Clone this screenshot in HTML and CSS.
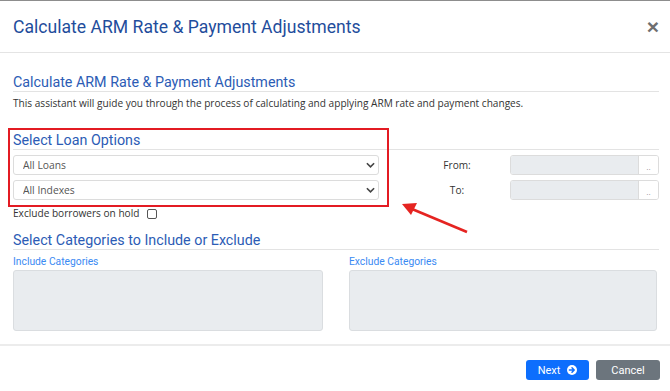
FILE: index.html
```html
<!DOCTYPE html>
<html lang="en">
<head>
    <meta charset="UTF-8">
    <meta name="viewport" content="width=device-width, initial-scale=1.0">
    <title>Calculate ARM Rate &amp; Payment Adjustments</title>
    <link rel="stylesheet" href="styles.css">
</head>
<body>
    <div class="modal">
        <div class="modal-header">
            <h1>Calculate ARM Rate &amp; Payment Adjustments</h1>
            <button class="close-btn" type="button">&times;</button>
        </div>

        <div class="modal-body">
            <h2 class="section-title">Calculate ARM Rate &amp; Payment Adjustments</h2>
            <p class="intro">This assistant will guide you through the process of calculating and applying ARM rate and payment changes.</p>

            <h2 class="section-title loan-title">Select Loan Options</h2>
            <div class="loan-grid">
                <div class="select-wrap">
                    <select><option>All Loans</option></select>
                    <svg class="chevron" viewBox="0 0 10 6" width="9" height="6"><path d="M1 1l4 4 4-4" fill="none" stroke="#444" stroke-width="1.8"/></svg>
                </div>
                <label class="date-label">From:</label>
                <div class="date-field">
                    <input type="text" disabled>
                    <button type="button">..</button>
                </div>

                <div class="select-wrap">
                    <select><option>All Indexes</option></select>
                    <svg class="chevron" viewBox="0 0 10 6" width="9" height="6"><path d="M1 1l4 4 4-4" fill="none" stroke="#444" stroke-width="1.8"/></svg>
                </div>
                <label class="date-label">To:</label>
                <div class="date-field">
                    <input type="text" disabled>
                    <button type="button">..</button>
                </div>
            </div>

            <div class="hold-row">
                <span>Exclude borrowers on hold</span>
                <input type="checkbox">
            </div>

            <h2 class="section-title cat-title">Select Categories to Include or Exclude</h2>
            <div class="cat-grid">
                <div class="cat-col">
                    <div class="cat-label">Include Categories</div>
                    <div class="cat-box"></div>
                </div>
                <div class="cat-col">
                    <div class="cat-label">Exclude Categories</div>
                    <div class="cat-box"></div>
                </div>
            </div>
        </div>

        <div class="modal-footer">
            <button class="btn btn-next" type="button">
                Next
                <svg viewBox="0 0 10 10" width="10" height="10"><circle cx="5" cy="5" r="5" fill="#fff"/><path d="M2.4 5h4.6M5 2.8L7.2 5 5 7.2" fill="none" stroke="#0d6efd" stroke-width="1.5" stroke-linecap="round" stroke-linejoin="round"/></svg>
            </button>
            <button class="btn btn-cancel" type="button">Cancel</button>
        </div>

        <!-- annotation overlay -->
        <div class="highlight-box"></div>
        <svg class="arrow" width="670" height="391" viewBox="0 0 670 391">
            <line x1="467" y1="232" x2="412" y2="209" stroke="#e52421" stroke-width="2.6"/>
            <polygon points="402,204 417,203 411,215" fill="#e52421"/>
        </svg>
    </div>
</body>
</html>
```

FILE: styles.css
```css
* {
    margin: 0;
    padding: 0;
    box-sizing: border-box;
}

body {
    font-family: 'Open Sans', 'Liberation Sans', sans-serif;
    background: #fff;
    color: #333;
    width: 670px;
    height: 391px;
    overflow: hidden;
}

.modal {
    position: relative;
    width: 670px;
    height: 391px;
    border-top: 1px solid #8d8d8d;
    background: #fff;
}

.modal-header {
    display: flex;
    justify-content: space-between;
    align-items: center;
    height: 52px;
    padding: 0 11px 0 13px;
    border-bottom: 1px solid #e4e4e4;
}

.modal-header h1 {
    font-family: 'Roboto', sans-serif;
    font-size: 17.6px;
    font-weight: 400;
    color: #1f4d9c;
}

.close-btn {
    border: none;
    background: none;
    font-family: 'Liberation Sans', sans-serif;
    font-size: 21px;
    font-weight: bold;
    color: #6f6f6f;
    line-height: 1;
    cursor: pointer;
}

.modal-body {
    padding: 20px 11px 13px 13px;
}

.section-title {
    font-family: 'Roboto', sans-serif;
    font-size: 14.3px;
    font-weight: 400;
    line-height: 18px;
    color: #2c5cb5;
    border-bottom: 1px solid #e3e3e3;
}

.intro {
    margin-top: 4px;
    font-size: 10.1px;
    line-height: 14px;
    color: #333;
}

.loan-title {
    margin-top: 22px;
    line-height: 17px;
}

.loan-grid {
    display: grid;
    grid-template-columns: 366px 1fr 149px;
    row-gap: 5px;
    margin-top: 5px;
    align-items: center;
}

.select-wrap {
    position: relative;
    height: 20px;
}

.select-wrap select {
    display: block;
    appearance: none;
    width: 100%;
    height: 20px;
    border: 1px solid #dcdcdc;
    border-radius: 3px;
    background: #fff;
    padding: 0 9px;
    font-family: 'Open Sans', sans-serif;
    font-size: 10.3px;
    color: #555;
}

.chevron {
    position: absolute;
    right: 4px;
    top: 7px;
}

.date-label {
    justify-self: end;
    width: 54px;
    margin-right: 26px;
    text-align: center;
    font-size: 10.1px;
    color: #333;
}

.date-field {
    display: flex;
    height: 20px;
    border: 1px solid #dcdcdc;
    border-radius: 3px;
    overflow: hidden;
}

.date-field input {
    flex: 1;
    width: 0;
    min-width: 0;
    border: none;
    background: #e9ecef;
    border-right: 1px solid #dcdcdc;
}

.date-field button {
    flex: 0 0 19px;
    border: none;
    background: #fff;
    color: #888;
    font-size: 8px;
    padding-top: 4px;
}

.hold-row {
    display: flex;
    align-items: center;
    gap: 8px;
    height: 14px;
    margin-top: 6px;
    font-size: 10.1px;
    color: #333;
}

.hold-row input {
    appearance: none;
    width: 10px;
    height: 10px;
    border: 1px solid #555;
    border-radius: 2px;
    background: #fff;
    margin-top: 2px;
}

.cat-title {
    margin-top: 11px;
}

.cat-grid {
    display: grid;
    grid-template-columns: 310px 308px;
    column-gap: 26px;
    margin-top: 5px;
}

.cat-label {
    font-family: 'Roboto', sans-serif;
    font-size: 10.3px;
    line-height: 14px;
    color: #3a8af3;
}

.cat-box {
    height: 61px;
    margin-top: 1px;
    background: #e9ecef;
    border: 1px solid #dadde0;
    border-radius: 3px;
}

.modal-footer {
    display: flex;
    justify-content: flex-end;
    gap: 7px;
    padding: 14px 10px 0 0;
    border-top: 2px solid #ececec;
}

.btn {
    display: flex;
    align-items: center;
    justify-content: center;
    gap: 7px;
    height: 20px;
    border: none;
    border-radius: 3px;
    font-family: 'Roboto', sans-serif;
    font-size: 11px;
    color: #fff;
    cursor: pointer;
}

.btn-next {
    width: 63px;
    background: #0d6efd;
}

.btn-cancel {
    width: 64px;
    background: #6c757d;
}

.highlight-box {
    position: absolute;
    left: 8px;
    top: 127px;
    width: 381px;
    height: 79px;
    border: 2.5px solid #e31b23;
}

.arrow {
    position: absolute;
    left: 0;
    top: -1px;
    pointer-events: none;
}
```
